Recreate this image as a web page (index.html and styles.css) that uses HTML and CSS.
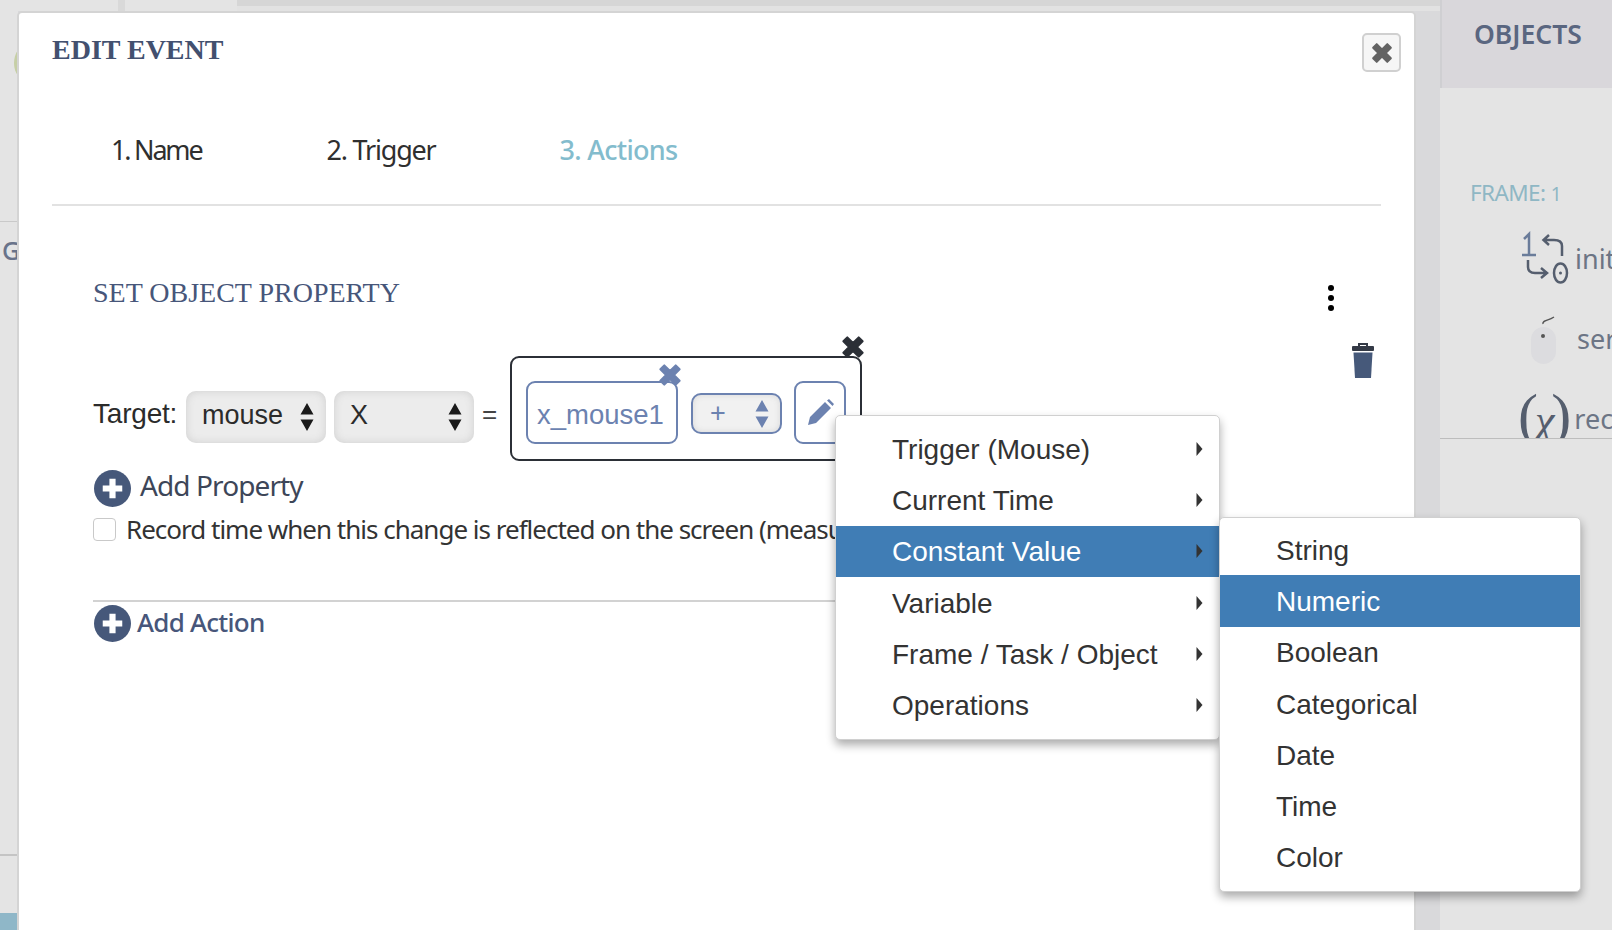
FILE: index.html
```html
<!DOCTYPE html>
<html lang="en">
<head>
<meta charset="utf-8">
<title>Edit Event</title>
<link rel="stylesheet" href="styles.css">
</head>
<body>
<svg class="defs" width="0" height="0" aria-hidden="true">
  <defs>
    <symbol id="i-x" viewBox="0 0 20 20"><path d="M2.6 5.6 5.6 2.6 10 7 14.4 2.6 17.4 5.6 13 10 17.4 14.4 14.4 17.4 10 13 5.6 17.4 2.6 14.4 7 10Z" fill="currentColor" stroke="currentColor" stroke-width="1.6" stroke-linejoin="round"/></symbol>
    <symbol id="i-plus" viewBox="0 0 36 36"><circle cx="18" cy="18" r="18" fill="#46587a"/><path d="M15 8.500h6V15h6.500v6H21v6.500h-6V21H8.500V15H15Z" fill="#fff"/></symbol>
    <symbol id="i-updown" viewBox="0 0 14 28"><path d="M7 0 13.500 11.500H.5ZM7 28 .5 16.500H13.500Z" fill="currentColor"/></symbol>
    <symbol id="i-right" viewBox="0 0 7 14"><path d="M.5 0 6.500 7 .5 14Z" fill="currentColor"/></symbol>
  </defs>
</svg>

<div class="app">
  <aside class="left">
    <div class="left-top"><div class="left-arc"></div></div>
    <div class="left-g">G</div>
    <div class="left-rule"></div>
    <div class="left-foot"></div>
  </aside>
  <main class="center">
    <div class="center-top"></div>
  </main>
  <aside class="objects">
    <h2 class="objects-head">OBJECTS</h2>
    <div class="frame-label">FRAME: <span class="frame-num">1</span></div>
    <ul class="obj-list">
      <li class="obj-item obj-init">
        <svg class="obj-icon" width="52" height="54" viewBox="0 0 52 54" fill="none" stroke-width="2.500" stroke="#555e6e">
          <path d="M6 8 11 3V24M4 24H18" stroke="#6a7c9a"/>
          <path d="M44 25V15C44 10 40 9 36 9H26M31 4 25.500 9 31 14"/>
          <path d="M10 29V36C10 41 13 42 17 42H28M23 37 29 42 23 47"/>
          <ellipse cx="42.500" cy="42" rx="6.500" ry="9.500"/>
          <circle cx="42.500" cy="42" r="1.500" fill="#555e6e" stroke="none"/>
        </svg>
        <span>init</span>
      </li>
      <li class="obj-item obj-mouse">
        <svg class="obj-icon" width="52" height="52" viewBox="0 0 52 52">
          <rect x="13" y="15" width="25" height="37" rx="12.500" fill="#dcdcdf"/>
          <path d="M25 12C24 8 30 9 36 5" fill="none" stroke="#555" stroke-width="1.400"/>
          <circle cx="25" cy="24" r="2" fill="#555"/>
        </svg>
        <span>ser</span>
      </li>
      <li class="obj-item obj-var">
        <span class="var-glyph">(<i>χ</i>)</span>
        <span>rec</span>
      </li>
    </ul>
  </aside>
</div>

<div class="modal">
  <header class="modal-head">
    <h1 class="modal-title">EDIT EVENT</h1>
    <button class="close" type="button" aria-label="Close"><svg width="24" height="24"><use href="#i-x"/></svg></button>
  </header>
  <nav class="steps">
    <span class="step step-name">1. Name</span>
    <span class="step">2. Trigger</span>
    <span class="step step-on">3. Actions</span>
  </nav>
  <section class="action">
    <div class="action-main">
      <h3 class="action-title">SET OBJECT PROPERTY</h3>
      <div class="target-row">
        <span class="target-label">Target:</span>
        <div class="sel"><span>mouse</span><svg class="updown" width="14" height="28"><use href="#i-updown"/></svg></div>
        <div class="sel"><span>X</span><svg class="updown" width="14" height="28"><use href="#i-updown"/></svg></div>
        <span class="eq">=</span>
        <div class="expr">
          <svg class="expr-x" width="26" height="26"><use href="#i-x"/></svg>
          <div class="var-box"><span class="var-name">x_mouse1</span>
            <svg class="var-x" width="26" height="26"><use href="#i-x"/></svg>
          </div>
          <div class="op-sel"><span>+</span><svg class="updown" width="14" height="28"><use href="#i-updown"/></svg></div>
          <div class="edit-box">
            <svg width="30" height="30" viewBox="0 0 30 30"><path d="M3 27 5 19 20 4 26 10 11 25ZM22 2.500 24 1 29 6 27.500 8Z" fill="#6c82b0"/></svg>
          </div>
        </div>
      </div>
      <div class="add-prop">
        <svg width="37" height="37"><use href="#i-plus"/></svg>
        <span>Add Property</span>
      </div>
      <label class="record">
        <span class="check"></span>
        <span>Record time when this change is reflected on the screen (measurement)</span>
      </label>
      <div class="add-action">
        <svg width="37" height="37"><use href="#i-plus"/></svg>
        <span>Add Action</span>
      </div>
    </div>
    <div class="action-side">
      <div class="dots"><i></i><i></i><i></i></div>
      <svg class="trash" width="24" height="35" viewBox="0 0 24 35">
        <path d="M8 3V1H16V3" fill="none" stroke="#343a46" stroke-width="2"/>
        <rect x="1" y="3" width="22" height="5" rx="1" fill="#343a46"/>
        <path d="M2.500 9.500H21.500L20 35H4Z" fill="#46597a"/>
      </svg>
    </div>
  </section>
</div>

<ul class="menu menu-main">
  <li class="menu-item"><span>Trigger (Mouse)</span><svg width="7" height="14"><use href="#i-right"/></svg></li>
  <li class="menu-item"><span>Current Time</span><svg width="7" height="14"><use href="#i-right"/></svg></li>
  <li class="menu-item is-active"><span>Constant Value</span><svg class="arrow-dark" width="7" height="14"><use href="#i-right"/></svg></li>
  <li class="menu-item"><span>Variable</span><svg width="7" height="14"><use href="#i-right"/></svg></li>
  <li class="menu-item"><span>Frame / Task / Object</span><svg width="7" height="14"><use href="#i-right"/></svg></li>
  <li class="menu-item"><span>Operations</span><svg width="7" height="14"><use href="#i-right"/></svg></li>
</ul>
<ul class="menu menu-sub">
  <li class="menu-item"><span>String</span></li>
  <li class="menu-item is-active"><span>Numeric</span></li>
  <li class="menu-item"><span>Boolean</span></li>
  <li class="menu-item"><span>Categorical</span></li>
  <li class="menu-item"><span>Date</span></li>
  <li class="menu-item"><span>Time</span></li>
  <li class="menu-item"><span>Color</span></li>
</ul>
</body>
</html>
```

FILE: styles.css
```css
* { box-sizing: border-box; }
html, body { margin: 0; height: 100%; }
body {
  width: 1612px;
  height: 930px;
  overflow: hidden;
  position: relative;
  background: #e3e3e3;
  font-family: "Noto Sans", sans-serif;
  color: #2f2f2f;
}
.defs { position: absolute; }
ul { list-style: none; margin: 0; padding: 0; }

.app { display: flex; height: 930px; }
.left { width: 18px; display: flex; flex-direction: column; background: #e4e4e4; overflow: hidden; }
.left-top { height: 222px; border-bottom: 1px solid #c9c9c9; position: relative; }
.left-arc { position: absolute; left: 14px; top: 44px; width: 30px; height: 38px; border-left: 3px solid #c6cfa6; border-radius: 50%; }
.left-g { margin-top: 15px; padding-left: 2px; font-size: 25px; line-height: 26px; font-weight: 500; color: #69738a; }
.left-rule { margin-top: 591px; border-top: 2px solid #c4c4c4; }
.left-foot { margin-top: auto; height: 17px; background: #8fb7c8; }
.center { flex: 1; background: #d9d9db; }
.center-top {
  height: 11px;
  background:
    linear-gradient(to right, #e4e4e4 100px, #d9d9d9 100px, #d9d9d9 107px, #e4e4e4 107px, #e4e4e4 219px, transparent 219px),
    linear-gradient(to bottom, #d6d6d6 6px, #e2e2e2 6px);
}

.objects { width: 172px; background: #e4e4e4; overflow: hidden; }
.objects-head {
  margin: 0; height: 88px; padding: 17px 0 0 32px;
  background: #d9d7db; border-left: 2px solid #cfcfd2;
  font-size: 26.500px; line-height: 34px; font-weight: 600; color: #5a6680;
}
.frame-label { margin: 90px 0 0 30px; font-size: 22.500px; line-height: 30px; color: #8fb7c4; letter-spacing: -.6px; }
.frame-num { font-size: 19px; }
.obj-list { margin-top: 9px; height: 221px; border-bottom: 1px solid #bdbdbd; overflow: hidden; }
.obj-item { display: flex; align-items: center; height: 80px; padding-left: 78px; gap: 5px; font-size: 27px; color: #6c7585; white-space: nowrap; }
.obj-icon { flex: none; }
.obj-mouse span { margin-left: 2px; }
.obj-var { gap: 3px; }
.var-glyph { font-family: "Liberation Serif", serif; font-size: 60px; line-height: 60px; color: #555e6e; }
.var-glyph i { font-size: 44px; margin: 0 -3px; }

.modal {
  position: absolute; left: 17px; top: 11px; width: 1399px; height: 960px;
  background: #fff; border: 2px solid #d4d4d4; border-radius: 5px;
}
.modal-head { height: 77px; padding: 20px 0 0 33px; position: relative; }
.modal-title {
  margin: 0; font-family: "Liberation Serif", serif; font-weight: 700;
  font-size: 28px; line-height: 34px; color: #42506f;
}
.close {
  position: absolute; left: 1343px; top: 20px; width: 39px; height: 39px; padding: 0;
  display: flex; align-items: center; justify-content: center;
  background: #f6f6f6; border: 2px solid #d0d0d0; border-radius: 5px; color: #636363;
}
.steps {
  margin-left: 33px; width: 1329px; height: 116px; padding: 40px 0 0 59px;
  display: flex; gap: 124px; border-bottom: 2px solid #e2e2e2;
  font-size: 27px; line-height: 40px; letter-spacing: -1.200px; color: #2f2f2f;
}
.step-name { letter-spacing: -2.200px; margin-right: 1px; }
.step-on { color: #83bccd; font-weight: 500; letter-spacing: -.7px; }

.action { display: flex; padding: 0 0 0 74px; }
.action-main { width: 1180px; flex: none; }
.action-title {
  margin: 70px 0 0; font-family: "Liberation Serif", serif; font-weight: 400;
  font-size: 28px; line-height: 34px; color: #47567a;
}
.target-row { display: flex; align-items: flex-start; margin-top: 46px; height: 105px; gap: 8px; font-family: "Liberation Sans", sans-serif; font-size: 27px; color: #2b2b2b; }
.target-label { width: 85px; margin-top: 32px; font-size: 28px; line-height: 52px; letter-spacing: -.2px; }
.sel {
  width: 140px; height: 52px; margin-top: 35px; padding: 0 12px 0 16px; display: flex; align-items: center; justify-content: space-between;
  background: #ececec; border-radius: 10px; box-shadow: inset 0 0 9px #cfcfcf;
}
.sel span { position: relative; top: -2px; }
.sel .updown { color: #1a1a1a; }
.eq { width: 19px; margin-top: 32px; margin-left: -2px; margin-right: 2px; text-align: center; font-size: 26px; line-height: 52px; color: #444; }
.expr {
  position: relative; width: 352px; height: 105px; padding: 23px 14px 0; display: flex; align-items: flex-start; gap: 13px;
  border: 2px solid #2b2f36; border-radius: 9px; margin-left: 1px;
}
.expr-x { position: absolute; right: -6px; top: -24px; color: #2b2f36; }
.var-box {
  position: relative; width: 152px; height: 63px; flex: none; padding-left: 9px;
  display: flex; align-items: center;
  border: 2px solid #6c82b0; border-radius: 9px; color: #6c82b0; white-space: nowrap; font-size: 27.500px;
}
.var-name { position: relative; top: 2px; }
.var-x { position: absolute; right: -7px; top: -21px; color: #6c82b0; }
.op-sel {
  width: 91px; height: 41px; flex: none; margin-top: 12px; padding: 0 11px 0 17px; display: flex; align-items: center; justify-content: space-between;
  border: 2px solid #6c82b0; border-radius: 10px; background: #f1f1f1; box-shadow: inset 0 0 6px #d8d8d8; color: #6c82b0;
}
.edit-box { width: 52px; height: 63px; flex: none; margin-left: -1px; display: flex; align-items: center; justify-content: center; border: 2px solid #6c82b0; border-radius: 9px; }

.add-prop { display: flex; align-items: center; height: 37px; margin-top: 9px; margin-left: 1px; gap: 9px; font-size: 28px; letter-spacing: -.9px; color: #3d4658; }
.add-prop span { position: relative; top: -4px; }
.record { display: flex; align-items: center; height: 24px; margin-top: 10px; gap: 10px; white-space: nowrap; font-size: 26px; letter-spacing: -1px; color: #333; }
.check { width: 23px; height: 23px; flex: none; border: 1px solid #c9c9c9; border-radius: 4px; background: #fff; }
.add-action {
  display: flex; align-items: center; gap: 6px; width: 1288px; height: 45px; margin-top: 59px; padding-left: 1px;
  border-top: 2px solid #d2d2d2; font-size: 26px; letter-spacing: -.75px; font-weight: 500; color: #47567a;
}
.add-action span { position: relative; top: -2px; }
.action-side { display: flex; flex-direction: column; align-items: flex-start; }
.dots { display: flex; flex-direction: column; gap: 4px; margin: 79px 0 0 55px; }
.dots i { display: block; width: 6px; height: 6px; border-radius: 50%; background: #000; }
.trash { margin: 32px 0 0 78px; }

.menu {
  position: absolute; background: #fff; border: 1px solid #d0d0d0; border-radius: 5px;
  box-shadow: 0 5px 10px rgba(0,0,0,.33);
  font-family: "Liberation Sans", sans-serif; font-size: 28px; color: #333;
}
.menu-main { left: 835px; top: 415px; width: 385px; height: 325px; padding-top: 7px; }
.menu-sub { left: 1219px; top: 517px; width: 362px; height: 375px; padding-top: 6px; }
.menu-item { height: 51.300px; padding: 0 16px 0 56px; display: flex; align-items: center; justify-content: space-between; }
.menu-item span { position: relative; top: 1px; }
.is-active { background: #407db5; color: #fff; }
.arrow-dark { color: #333; }
```
